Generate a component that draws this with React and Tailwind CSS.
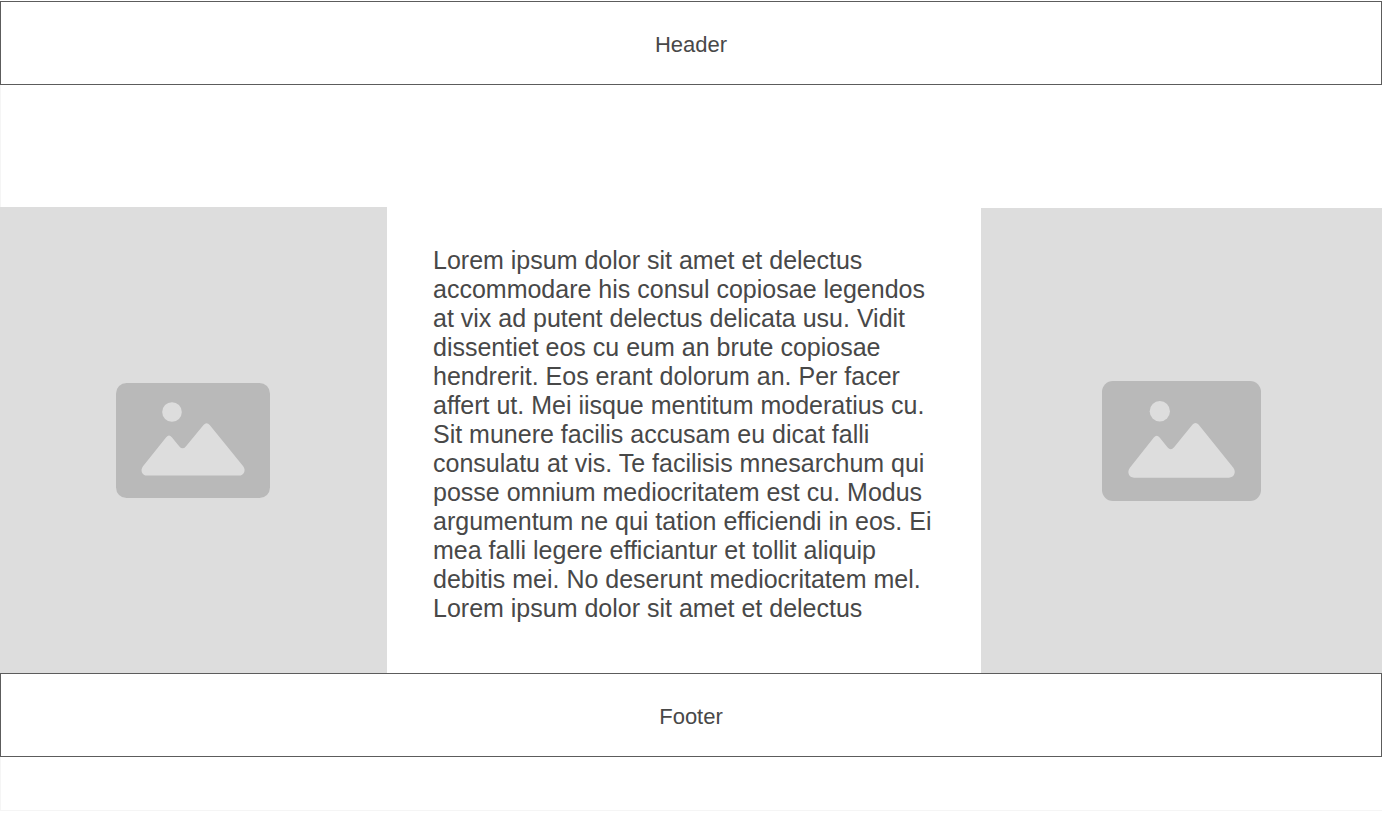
const lines = [
  'Lorem ipsum dolor sit amet et delectus',
  'accommodare his consul copiosae legendos',
  'at vix ad putent delectus delicata usu. Vidit',
  'dissentiet eos cu eum an brute copiosae',
  'hendrerit. Eos erant dolorum an. Per facer',
  'affert ut. Mei iisque mentitum moderatius cu.',
  'Sit munere facilis accusam eu dicat falli',
  'consulatu at vis. Te facilisis mnesarchum qui',
  'posse omnium mediocritatem est cu. Modus',
  'argumentum ne qui tation efficiendi in eos. Ei',
  'mea falli legere efficiantur et tollit aliquip',
  'debitis mei. No deserunt mediocritatem mel.',
  'Lorem ipsum dolor sit amet et delectus',
];

function PictureIcon({ className }) {
  return (
    <svg
      viewBox="0 0 154 115"
      preserveAspectRatio="none"
      className={className}
      role="img"
      aria-label="Image placeholder"
    >
      <rect width="154" height="115" rx="10.5" fill="#b9b9b9" />
      <circle cx="56" cy="29" r="9.8" fill="#dddddd" />
      <path
        d="M27 83.2 L50.2 54.2 Q53 50.9 55.8 54.2 L63.4 63.4 Q66.6 67.2 69.8 63.4 L87.5 42 Q90.6 38.6 93.7 42 L127.2 83.2 C130.4 87.5 127.8 92.6 123 92.6 H31 C26.2 92.6 23.8 87.5 27 83.2 Z"
        fill="#dddddd"
      />
    </svg>
  );
}

function Bar({ as: Tag, children }) {
  return (
    <Tag className="flex h-21 items-center justify-center border border-[#5c5c5c] bg-white pt-1 text-[22px] leading-7">
      {children}
    </Tag>
  );
}

export default function App() {
  return (
    <div className="bg-white pt-px pr-3.5 pb-2 font-['Liberation_Sans',Arial,sans-serif] text-[#484848]">
      <Bar as="header">Header</Bar>
      <div className="h-[122px] border-l border-[#f5f5f5]" />
      <main className="grid grid-cols-[387fr_594fr_401fr]">
        <div className="flex items-center justify-center bg-[#dddddd] pr-px">
          <PictureIcon className="h-[115px] w-[154px]" />
        </div>
        <p className="pt-[39px] pb-[50px] pl-[46px] text-[25px] leading-[29px] whitespace-nowrap">
          {lines.map((line, i) => (
            <span key={i} className="block">
              {line}
            </span>
          ))}
        </p>
        <div className="mt-px flex items-center justify-center bg-[#dddddd]">
          <PictureIcon className="h-[120px] w-[159px]" />
        </div>
      </main>
      <Bar as="footer">Footer</Bar>
      <div className="h-[54px] border-b border-l border-[#f5f5f5]" />
    </div>
  );
}
